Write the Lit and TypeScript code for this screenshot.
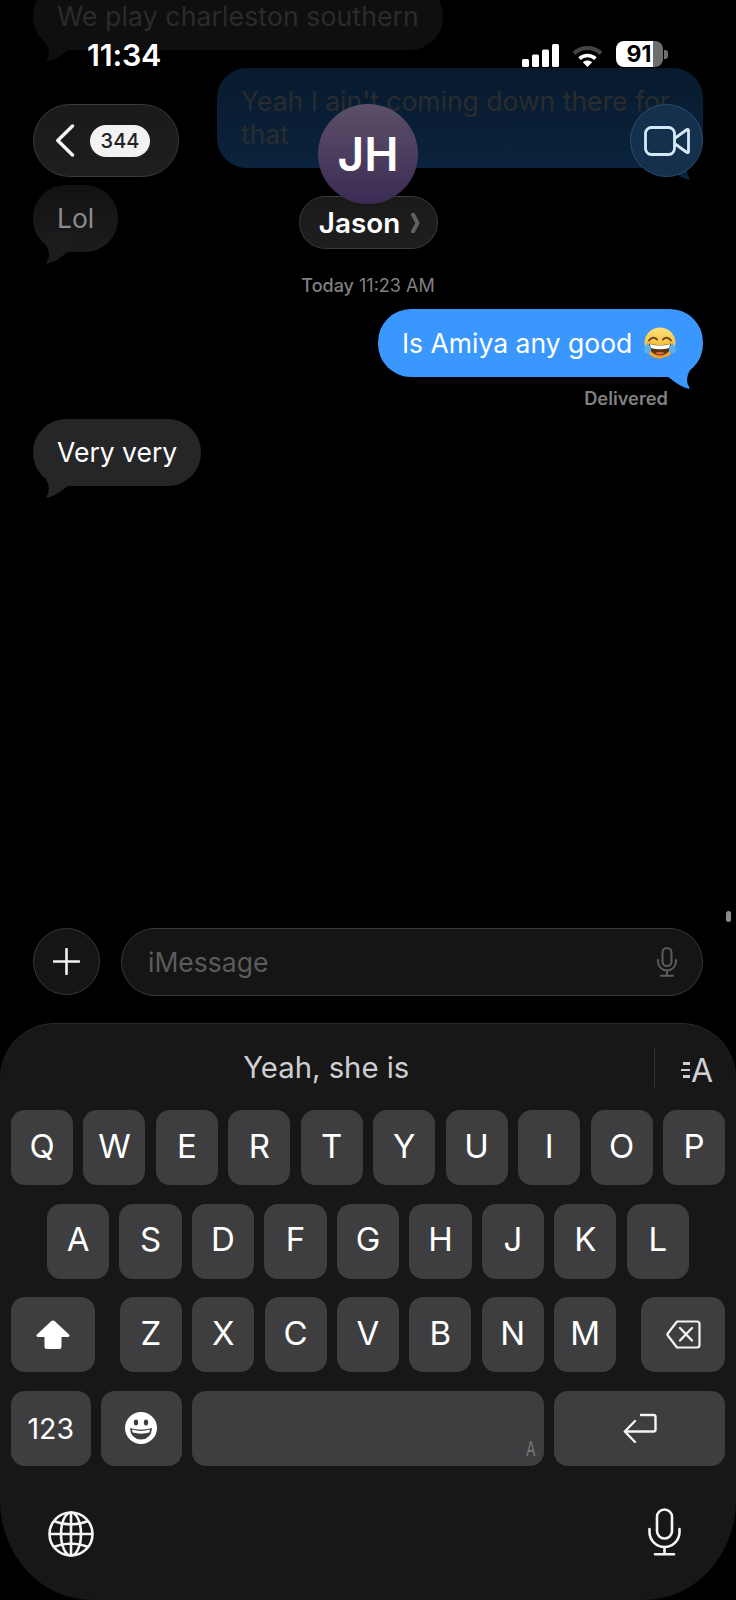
import { LitElement, html, css } from "lit";
import { customElement } from "lit/decorators.js";

const tail = (fill: string, cls: string) => html`<svg class="tail ${cls}" width="40" height="32" viewBox="0 0 40 32"><path fill="${fill}" d="M0 20H5C12 25 18 30 25 31.6Q27.5 32 26 29.5C22 24 24 14 34 4L20 0H0Z"/></svg>`;

const emoji = html`<svg class="emoji" width="32" height="34" viewBox="0 0 32 34">
  <defs><linearGradient id="ey" x1="0" y1="0" x2="0" y2="1"><stop offset="0" stop-color="#fbe27a"/><stop offset=".55" stop-color="#f8c13e"/><stop offset="1" stop-color="#ee9a2c"/></linearGradient></defs>
  <circle cx="16" cy="17" r="15.5" fill="url(#ey)"/>
  <path d="M5 14.5Q9 9.5 13 13.5M19 13.5Q23 9.5 27 14.5" fill="none" stroke="#6b4a1e" stroke-width="2" stroke-linecap="round"/>
  <path d="M5 17.5Q16 21 27 17.5Q26.5 29 16 29.5Q5.5 29 5 17.5Z" fill="#5c3413"/>
  <path d="M6 18Q16 21.2 26 18L25.3 22Q16 24.6 6.7 22Z" fill="#fff"/>
  <path d="M11 27Q16 24.8 21 27Q16 30 11 27Z" fill="#e86a3a"/>
  <path d="M3.5 16.5C1.5 20 0 22 0 24A3.5 3.5 0 0 0 7 24C7 22 5.5 20 3.5 16.5ZM28.5 16.5C26.5 20 25 22 25 24A3.5 3.5 0 0 0 32 24C32 22 30.5 20 28.5 16.5Z" fill="#58b2ec"/>
</svg>`;

const signal = html`<svg width="37" height="23" viewBox="0 0 37 23"><g fill="#fff"><rect x="0" y="15" width="7" height="8" rx="1.5"/><rect x="10" y="10.5" width="7" height="12.5" rx="1.5"/><rect x="20" y="5.5" width="7" height="17.5" rx="1.5"/><rect x="30" y="0" width="7" height="23" rx="1.5"/></g></svg>`;
const wifi = html`<svg width="31" height="22" viewBox="0 0 31 22"><path d="M2 8.5C9.5 1.3 21.5 1.3 29 8.5" fill="none" stroke="#454545" stroke-width="4"/><path d="M7.5 13.6C12 9.4 19 9.4 23.5 13.6" fill="none" stroke="#fff" stroke-width="3.6"/><path d="M15.5 22L10.8 17.2C13.4 15 17.6 15 20.2 17.2Z" fill="#fff"/></svg>`;
const chevronLeft = html`<svg width="20" height="33" viewBox="0 0 20 33"><path d="M17.5 2L2.8 16.5L17.5 31" fill="none" stroke="#f4f4f4" stroke-width="3.4" stroke-linecap="round" stroke-linejoin="round"/></svg>`;
const video = html`<svg width="46" height="30" viewBox="0 0 46 30"><rect x="1.5" y="1.5" width="29" height="27" rx="6" fill="none" stroke="#d3e9f7" stroke-width="2.8"/><path d="M30.5 12.5L43 3.5Q44.5 3 44.5 4.5V25.5Q44.5 27 43 26.5L30.5 17.5" fill="none" stroke="#d3e9f7" stroke-width="2.8" stroke-linejoin="round"/></svg>`;
const nameChevron = html`<svg width="9" height="20" viewBox="0 0 9 20"><path d="M2 1.5L6.5 10L2 18.5" fill="none" stroke="#606062" stroke-width="4" stroke-linecap="round" stroke-linejoin="round"/></svg>`;
const plus = html`<svg width="27" height="27" viewBox="0 0 27 27"><path d="M13.5 1V26M1 13.5H26" stroke="#f2f2f2" stroke-width="2.6" stroke-linecap="round"/></svg>`;
const micSmall = html`<svg width="20" height="30" viewBox="0 0 20 30"><rect x="5.5" y="1" width="9" height="18" rx="4.5" fill="none" stroke="#5c5c5e" stroke-width="2"/><path d="M1 13V14.5A9 9 0 0 0 19 14.5V13M10 23.5V28.5M4 28.8H16" fill="none" stroke="#5c5c5e" stroke-width="2" stroke-linecap="round"/></svg>`;
const micBig = html`<svg width="33" height="48" viewBox="0 0 33 48"><rect x="9" y="1.5" width="15" height="29" rx="7.5" fill="none" stroke="#f4f4f4" stroke-width="2.6"/><path d="M1.5 21V24A15 15 0 0 0 31.5 24V21M16.5 39V46M7 46.2H26" fill="none" stroke="#f4f4f4" stroke-width="2.6" stroke-linecap="round"/></svg>`;
const globe = html`<svg class="globe" width="46" height="46" viewBox="0 0 46 46"><g fill="none" stroke="#f4f4f4" stroke-width="2.6"><circle cx="23" cy="23" r="21.5"/><ellipse cx="23" cy="23" rx="10" ry="21.5"/><path d="M23 1.5V44.5M1.5 23H44.5M5.5 10Q23 17 40.5 10M5.5 36Q23 29 40.5 36"/></g></svg>`;
const shift = html`<svg width="34" height="29" viewBox="0 0 34 29"><path fill="#fff" d="M15.4 1Q17 -.2 18.6 1L33 14.5Q34.6 16.6 32 17H25.5V26.5Q25.5 29 23 29H11Q8.5 29 8.5 26.5V17H2Q-.6 16.6 1 14.5Z"/></svg>`;
const backspace = html`<svg width="35" height="29" viewBox="0 0 35 29"><path d="M11 1.5H31Q33.5 1.5 33.5 4V25Q33.5 27.5 31 27.5H11L1.8 15.5Q1 14.5 1.8 13.5Z" fill="none" stroke="#f4f4f4" stroke-width="2.2" stroke-linejoin="round"/><path d="M14 8L26 20.5M26 8L14 20.5" stroke="#f4f4f4" stroke-width="2.4" stroke-linecap="round"/></svg>`;
const returnIcon = html`<svg width="34" height="30" viewBox="0 0 34 30"><path d="M18 2H30.5Q32.5 2 32.5 4V16.5Q32.5 18.5 30.5 18.5H2M12 8L1.8 18.5L12 29" fill="none" stroke="#f4f4f4" stroke-width="2.4" stroke-linecap="round" stroke-linejoin="round"/></svg>`;
const smile = html`<svg width="32" height="32" viewBox="0 0 32 32"><circle cx="16" cy="16" r="16" fill="#fff"/><ellipse cx="11" cy="10.5" rx="2.2" ry="3" fill="#3d3d3f"/><ellipse cx="21" cy="10.5" rx="2.2" ry="3" fill="#3d3d3f"/><path d="M5 16Q16 19.5 27 16Q26.5 27 16 27.5Q5.5 27 5 16Z" fill="#3d3d3f"/><path d="M7 17.6Q16 20.4 25 17.6L24.4 20.6Q16 22.8 7.6 20.6Z" fill="#fff"/></svg>`;

@customElement("app-root")
export class AppRoot extends LitElement {
  static styles = css`
    :host { display: block; position: relative; width: 736px; height: 1600px; overflow: hidden; background: #000; font-family: Inter, "Liberation Sans", sans-serif; color: #fff; }
    .page { display: flex; flex-direction: column; height: 1600px; }

    .thread { flex: 1; display: flex; flex-direction: column; padding: 0 33px; margin-top: -17px; }
    .bubble { position: relative; padding: 17px 24px; border-radius: 33px; font-size: 26.5px; line-height: 33px; width: fit-content; box-sizing: border-box; }
    .tail { position: absolute; bottom: -12px; right: 0; }
    .tail.left { right: auto; left: 0; transform: scaleX(-1); }
    .in { align-self: flex-start; }
    .out { align-self: flex-end; }
    .faded-in { background: #0f0f10; color: #2b2b2d; width: 410px; letter-spacing: .15px; }
    .faded-out { background: linear-gradient(#081a2d, #0b233d); color: #2a2c2f; width: 486px; margin-top: 18px; border-radius: 30px; }
    .lol { background: linear-gradient(#121213, #1c1c1e); color: #8c8c8e; margin-top: 17px; }
    .time { text-align: center; margin-top: 23px; font-size: 18px; line-height: 22px; color: #808082; }
    .time b { font-weight: 500; }
    .sent { background: #3a97fd; margin-top: 12px; width: 325px; white-space: nowrap; display: flex; align-items: center; }
    .emoji { margin-left: 12px; flex: none; }
    .status { align-self: flex-end; margin: 10px 35px 0 0; font-size: 18.3px; line-height: 22px; font-weight: 600; color: #808082; }
    .recv { background: #262628; margin-top: 10px; }

    .overlay { position: absolute; top: 0; left: 0; right: 0; }
    .statusbar { display: flex; align-items: center; height: 26px; margin-top: 41px; padding: 0 68px 0 87px; }
    .clock { font-size: 30.5px; font-weight: 600; letter-spacing: -.2px; flex: 1; }
    .indicators { display: flex; align-items: flex-end; gap: 13px; }
    .battery { display: flex; align-items: center; }
    .cell { display: flex; align-items: center; justify-content: center; width: 47px; height: 26px; border-radius: 8px; background: linear-gradient(90deg, #fff 78%, #6e6e6e 78%); color: #000; font-size: 23px; font-weight: 700; }
    .cell span { margin-right: 1px; }
    .nub { width: 4px; height: 9px; background: #6e6e6e; border-radius: 0 3px 3px 0; margin-left: 1px; }

    .nav { display: grid; grid-template-columns: 1fr auto 1fr; padding: 0 33px; margin-top: 37px; align-items: start; }
    .glass { background: linear-gradient(#1a1a1b, #1e1e1f); border: 1.5px solid #3a3a3b; box-sizing: border-box; }
    .back { display: flex; align-items: center; gap: 15px; width: 146px; height: 73px; border-radius: 37px; padding-left: 21px; }
    .badge { display: flex; align-items: center; justify-content: center; width: 60px; height: 32px; border-radius: 16px; background: #f2f2f2; color: #222; font-size: 20px; font-weight: 500; }
    .contact { display: flex; flex-direction: column; align-items: center; }
    .avatar { display: flex; align-items: center; justify-content: center; width: 100px; height: 100px; border-radius: 50%; background: linear-gradient(#5c4f68, #3b2c54); font-size: 46px; font-weight: 600; z-index: 1; }
    .name { display: flex; align-items: center; justify-content: center; gap: 11px; width: 139px; height: 53px; margin-top: -8px; border-radius: 27px; font-size: 27.8px; font-weight: 600; padding-left: 3px; }
    .videobtn { justify-self: end; display: flex; align-items: center; justify-content: center; width: 73px; height: 73px; border-radius: 50%; background: #15304c; border: 1.5px solid #2c4c6d; box-sizing: border-box; }

    .composer { display: flex; gap: 21px; padding: 0 33px; margin-bottom: 27px; }
    .plusbtn { display: flex; align-items: center; justify-content: center; flex: none; width: 67px; height: 67px; border-radius: 50%; background: #151516; border: 1.5px solid #39393a; box-sizing: border-box; }
    .field { flex: 1; display: flex; align-items: center; justify-content: space-between; height: 68px; border-radius: 34px; background: #151516; border: 1.5px solid #39393a; box-sizing: border-box; padding: 0 25px 0 26px; color: #5b5b5d; font-size: 26.5px; }
    .scrollbar { position: absolute; left: 726px; top: 911px; width: 5px; height: 11px; border-radius: 3px; background: #8a8a8a; }

    .keyboard { height: 577px; box-sizing: border-box; background: #171718; border-top: 1.5px solid #2c2c2e; border-radius: 55px 55px 92px 92px / 55px 55px 100px 100px; padding: 0 11px; }
    .suggest { display: flex; align-items: center; height: 86px; }
    .word { flex: 1; text-align: center; font-size: 29.3px; color: #cfcfd1; padding-right: 12px; }
    .divider { width: 1.5px; height: 40px; background: #333335; }
    .aa { display: flex; align-items: center; gap: 1px; width: 70px; padding-left: 26px; box-sizing: border-box; color: #cfcfd1; font-size: 32px; font-weight: 400; margin-top: 6px; }
    .lines { display: flex; flex-direction: column; align-items: flex-end; gap: 4px; }
    .lines i { display: block; height: 2.4px; background: #cfcfd1; width: 9px; }
    .lines i:first-child { width: 7px; }
    .lines i:last-child { width: 7px; }

    .rows { display: flex; flex-direction: column; gap: 18.67px; }
    .row { display: flex; gap: 10.4px; height: 75px; }
    .row.mid { padding: 0 36px; }
    .key { flex: 1 1 0; display: flex; align-items: center; justify-content: center; border-radius: 14px; background: #3e3e40; font-size: 33px; color: #fff; min-width: 0; position: relative; box-sizing: border-box; }
    .key.letter { padding-bottom: 4px; }
    .key.fn { flex: none; }
    .shift, .del { width: 84px; }
    .shift { margin-right: 14.5px; }
    .del { margin-left: 14.5px; }
    .k123 { width: 79.5px; font-size: 28.5px; }
    .ksmile { width: 81px; }
    .kspace { width: 351.5px; }
    .spacea { position: absolute; right: 6px; bottom: 6px; font-size: 20px; line-height: 22px; color: #77777a; transform: scaleX(.7); }

    .bottom { display: flex; align-items: center; justify-content: space-between; padding: 0 44px 0 37px; margin-top: 41px; }
    .globe { margin-top: 4px; }
  `;

  private keys(s: string) {
    return [...s].map((k) => html`<div class="key letter">${k}</div>`);
  }

  render() {
    return html`
      <div class="page">
        <div class="thread">
          <div class="bubble in faded-in">We play charleston southern${tail("#0f0f10", "left")}</div>
          <div class="bubble out faded-out">Yeah I ain't coming down there for that${tail("#0b233d", "")}</div>
          <div class="bubble in lol">Lol${tail("#1c1c1e", "left")}</div>
          <div class="time"><b>Today</b> 11:23 AM</div>
          <div class="bubble out sent">Is Amiya any good ${emoji}${tail("#3a97fd", "")}</div>
          <div class="status">Delivered</div>
          <div class="bubble in recv">Very very${tail("#262628", "left")}</div>
        </div>
        <div class="composer">
          <div class="plusbtn">${plus}</div>
          <div class="field"><span>iMessage</span>${micSmall}</div>
        </div>
        <div class="keyboard">
          <div class="suggest">
            <div class="word">Yeah, she is</div>
            <div class="divider"></div>
            <div class="aa"><div class="lines"><i></i><i></i><i></i></div><span>A</span></div>
          </div>
          <div class="rows">
            <div class="row">${this.keys("QWERTYUIOP")}</div>
            <div class="row mid">${this.keys("ASDFGHJKL")}</div>
            <div class="row">
              <div class="key fn shift">${shift}</div>
              ${this.keys("ZXCVBNM")}
              <div class="key fn del">${backspace}</div>
            </div>
            <div class="row">
              <div class="key fn k123">123</div>
              <div class="key fn ksmile">${smile}</div>
              <div class="key fn kspace"><span class="spacea">A</span></div>
              <div class="key">${returnIcon}</div>
            </div>
          </div>
          <div class="bottom">${globe}${micBig}</div>
        </div>
      </div>
      <div class="scrollbar"></div>
      <div class="overlay">
        <div class="statusbar">
          <div class="clock">11:34</div>
          <div class="indicators">
            ${signal}${wifi}
            <div class="battery"><div class="cell"><span>91</span></div><div class="nub"></div></div>
          </div>
        </div>
        <div class="nav">
          <div class="back glass">${chevronLeft}<div class="badge">344</div></div>
          <div class="contact">
            <div class="avatar">JH</div>
            <div class="name glass">Jason ${nameChevron}</div>
          </div>
          <div class="videobtn">${video}</div>
        </div>
      </div>
    `;
  }
}
